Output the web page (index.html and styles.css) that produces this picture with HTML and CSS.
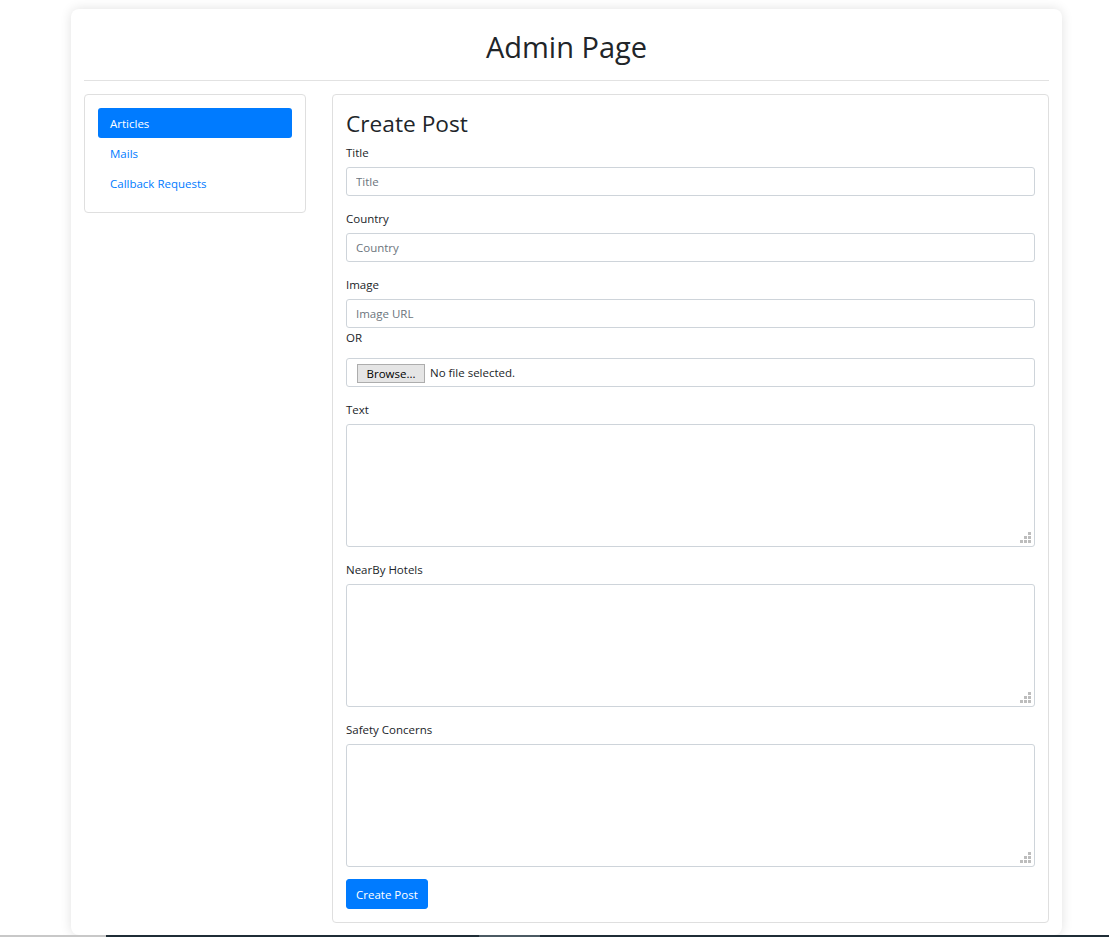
FILE: index.html
```html
<!DOCTYPE html>
<html lang="en">
<head>
<meta charset="utf-8">
<title>Admin Page</title>
<link rel="stylesheet" href="styles.css">
</head>
<body>
<div class="page">
  <h1 class="page-title">Admin Page</h1>
  <hr class="divider">
  <div class="layout">
    <aside class="card side-card">
      <nav class="side-nav">
        <a class="nav-link active" href="#">Articles</a>
        <a class="nav-link" href="#">Mails</a>
        <a class="nav-link" href="#">Callback Requests</a>
      </nav>
    </aside>
    <main class="card main-card">
      <h2 class="card-title">Create Post</h2>
      <form class="post-form">
        <div class="form-group">
          <label class="form-label">Title</label>
          <input class="form-control" type="text" placeholder="Title">
        </div>
        <div class="form-group">
          <label class="form-label">Country</label>
          <input class="form-control" type="text" placeholder="Country">
        </div>
        <div class="form-group">
          <label class="form-label">Image</label>
          <input class="form-control" type="text" placeholder="Image URL">
          <div class="or-label">OR</div>
          <div class="file-field">
            <span class="browse-btn">Browse...</span>
            <span class="file-name">No file selected.</span>
          </div>
        </div>
        <div class="form-group">
          <label class="form-label">Text</label>
          <div class="ta-wrap">
            <textarea class="form-control ta"></textarea>
            <svg class="grip" width="11" height="11" viewBox="0 0 11 11"><rect x="8" y="0" width="3" height="3"/><rect x="4" y="4" width="3" height="3"/><rect x="8" y="4" width="3" height="3"/><rect x="0" y="8" width="3" height="3"/><rect x="4" y="8" width="3" height="3"/><rect x="8" y="8" width="3" height="3"/></svg>
          </div>
        </div>
        <div class="form-group">
          <label class="form-label">NearBy Hotels</label>
          <div class="ta-wrap">
            <textarea class="form-control ta"></textarea>
            <svg class="grip" width="11" height="11" viewBox="0 0 11 11"><rect x="8" y="0" width="3" height="3"/><rect x="4" y="4" width="3" height="3"/><rect x="8" y="4" width="3" height="3"/><rect x="0" y="8" width="3" height="3"/><rect x="4" y="8" width="3" height="3"/><rect x="8" y="8" width="3" height="3"/></svg>
          </div>
        </div>
        <div class="form-group">
          <label class="form-label">Safety Concerns</label>
          <div class="ta-wrap">
            <textarea class="form-control ta"></textarea>
            <svg class="grip" width="11" height="11" viewBox="0 0 11 11"><rect x="8" y="0" width="3" height="3"/><rect x="4" y="4" width="3" height="3"/><rect x="8" y="4" width="3" height="3"/><rect x="0" y="8" width="3" height="3"/><rect x="4" y="8" width="3" height="3"/><rect x="8" y="8" width="3" height="3"/></svg>
          </div>
        </div>
        <button class="btn-primary" type="button">Create Post</button>
      </form>
    </main>
  </div>
</div>
<footer class="footer"></footer>
</body>
</html>
```
FILE: styles.css
```css
* { box-sizing: border-box; }
html, body { margin: 0; padding: 0; background: #fff; }
body {
  font-family: "Open Sans", "Noto Sans", sans-serif;
  font-size: 11.5px;
  line-height: 18px;
  color: #212529;
  overflow: hidden;
}
.page {
  width: 991px;
  margin: 9px 0 0 71px;
  background: #fff;
  border-radius: 8px;
  box-shadow: 0 0 12px rgba(0, 0, 0, 0.12);
  padding: 20px 13px 12px;
}
.page-title {
  margin: 0;
  font-size: 29px;
  line-height: 36px;
  font-weight: 400;
  text-align: center;
}
.divider {
  margin: 15px 0 13px;
  border: 0;
  border-top: 1px solid #e2e2e2;
}
.layout {
  display: grid;
  grid-template-columns: 222px 717px;
  column-gap: 26px;
  align-items: start;
}
.card {
  border: 1px solid #dfdfdf;
  border-radius: 4px;
  padding: 13px;
  background: #fff;
}
.side-card { padding-bottom: 13.5px; }
.side-nav { display: flex; flex-direction: column; }
.nav-link {
  display: block;
  padding: 7px 12px 5.5px;
  color: #007bff;
  text-decoration: none;
  border-radius: 3px;
}
.nav-link.active { background: #007bff; color: #fff; padding: 6.5px 12px 5px; }
.card-title {
  font-size: 22.7px;
  line-height: 29px;
  font-weight: 400;
  padding-top: 1px;
  margin: 0 0 5px;
}
.post-form { display: flex; flex-direction: column; }
.form-group { margin-bottom: 13px; display: flex; flex-direction: column; }
.form-label { display: block; padding-top: 1px; margin-bottom: 5px; }
.form-control {
  display: block;
  width: 100%;
  height: 29px;
  padding: 0 9px;
  font-family: inherit;
  font-size: 11.5px;
  color: #495057;
  background: #fff;
  border: 1px solid #ced4da;
  border-radius: 3px;
  outline: none;
}
.form-control::placeholder { color: #6c757d; }
.or-label { padding-top: 1px; margin-bottom: 11px; }
.file-field {
  height: 29px;
  border: 1px solid #ced4da;
  border-radius: 3px;
  display: flex;
  align-items: center;
  padding: 1px 10px 0;
  gap: 5px;
  color: #212529;
}
.browse-btn {
  background: #e5e5e5;
  border: 1px solid #adadad;
  color: #000;
  padding: 0 8.5px;
  height: 19px;
  line-height: 17px;
}
.ta-wrap { position: relative; }
.form-control.ta {
  height: 123px;
  resize: none;
  padding: 6px 9px;
}
.grip {
  position: absolute;
  right: 4px;
  bottom: 4px;
  fill: #bdbdbd;
}
.btn-primary {
  align-self: flex-start;
  height: 30px;
  padding: 1px 9px 0;
  background: #007bff;
  color: #fff;
  border: 1px solid #007bff;
  border-radius: 3px;
  font-family: inherit;
  font-size: 11.5px;
  margin-top: -1px;
}
.footer {
  height: 2px;
  background: linear-gradient(to right, #c8c8c8 0, #c8c8c8 106px, #1f2d36 106px, #1f2d36 479px, #4b5a63 479px, #4b5a63 540px, #1f2d36 540px);
}
```
